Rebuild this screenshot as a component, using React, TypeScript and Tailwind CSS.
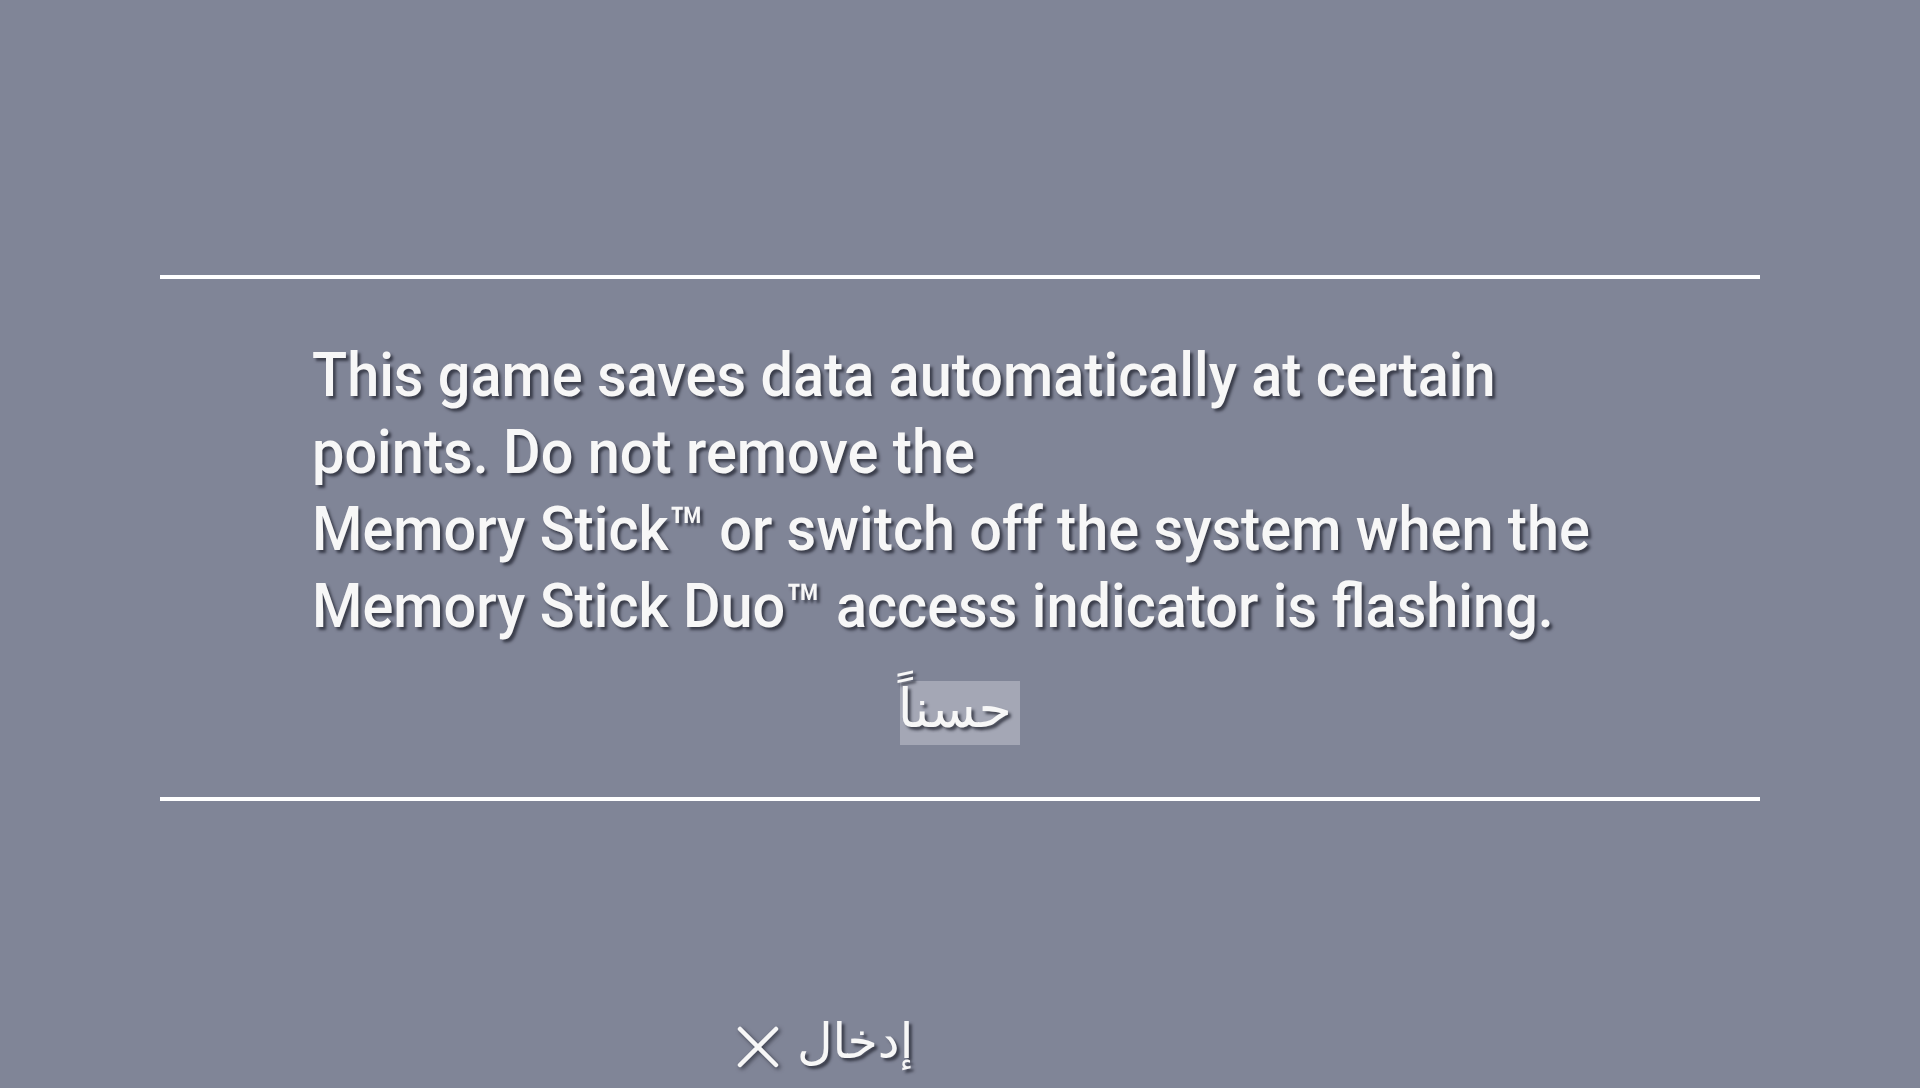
import React from "react";

const shadow = "[text-shadow:3px_3px_3px_rgba(35,38,50,0.75)]";

export default function App() {
  return (
    <div className="w-[1920px] h-[1088px] bg-[#808597] overflow-hidden flex flex-col font-['Roboto',sans-serif] text-[#f7f7f7]">
      <div className="h-[275px] shrink-0" />
      <div className="ml-[160px] w-[1600px] h-[4px] bg-white shrink-0" />

      <div className="pt-[58px] pl-[312px]">
        <p className={`text-[61px] font-medium leading-[77px] origin-left scale-x-[0.945] whitespace-nowrap ${shadow}`}>
          This game saves data automatically at certain
          <br />
          points. Do not remove the
          <br />
          Memory Stick™ or switch off the system when the
          <br />
          Memory Stick Duo™ access indicator is flashing.
        </p>
      </div>

      <div className="pt-[36px] flex justify-center">
        <button className="w-[120px] h-[64px] bg-[#a4a7b5] flex items-center justify-end pr-[8px]">
          <span dir="rtl" className={`font-['DejaVu_Sans',sans-serif] text-[54px] leading-none whitespace-nowrap -mt-[8px] ${shadow}`}>
            حسناً
          </span>
        </button>
      </div>

      <div className="mt-[52px] ml-[160px] w-[1600px] h-[4px] bg-white shrink-0" />

      <div className="mt-[225px] pl-[737px] flex items-center gap-[18px]">
        <svg width="42" height="42" viewBox="0 0 42 42" className="drop-shadow-[2px_2px_2px_rgba(35,38,50,0.75)]">
          <path d="M3 3 L39 39 M39 3 L3 39" stroke="#f7f7f7" strokeWidth="4.5" strokeLinecap="round" />
        </svg>
        <span dir="rtl" className={`font-['DejaVu_Sans',sans-serif] text-[49px] leading-none -mt-[12px] ${shadow}`}>
          إدخال
        </span>
      </div>
    </div>
  );
}
